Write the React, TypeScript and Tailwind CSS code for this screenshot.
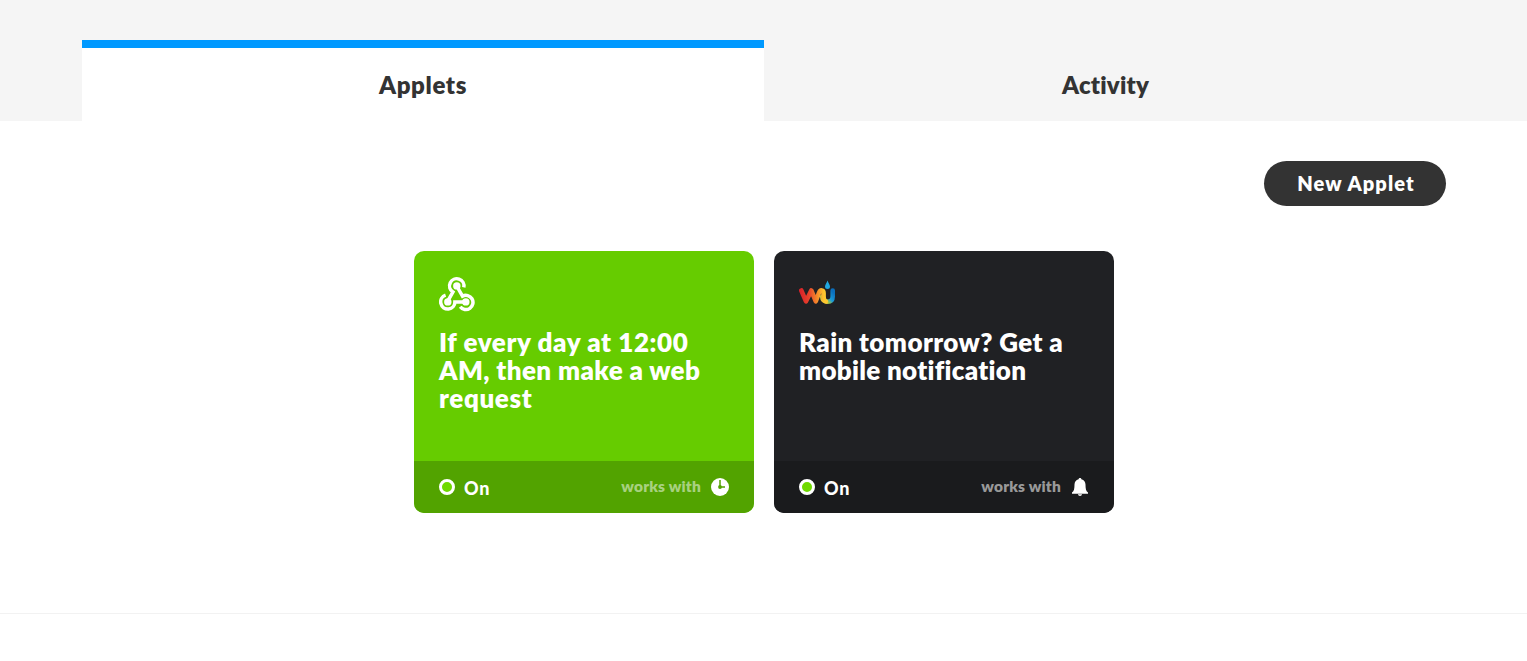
import type { ReactNode } from "react";

function WebhookIcon() {
  return (
    <svg className="block size-9" viewBox="0 0 36 36" fill="none" stroke="#fff" strokeWidth="3.5">
      <path d="M24.8 11.4A7.2 7.2 0 1 0 13.9 16L8.7 25.2" />
      <path d="M17.7 10L23.5 20.2A7.1 7.1 0 1 1 21.2 30.7" />
      <path d="M26.7 25.9H15.9A7.1 7.1 0 1 1 6.6 19.2" />
      <g fill="#fff" stroke="none">
        <circle cx="17.8" cy="9.9" r="3.7" />
        <circle cx="8.8" cy="25.9" r="3.7" />
        <circle cx="26.8" cy="25.9" r="3.7" />
      </g>
    </svg>
  );
}

function WeatherIcon() {
  return (
    <svg className="block size-9" viewBox="0 0 36 36" fill="none">
      <defs>
        <linearGradient id="wu-w" gradientUnits="userSpaceOnUse" x1="0" y1="0" x2="25" y2="0">
          <stop offset="0" stopColor="#d81f2a" />
          <stop offset=".4" stopColor="#e8432b" />
          <stop offset=".72" stopColor="#f58a2b" />
          <stop offset="1" stopColor="#fdc82f" />
        </linearGradient>
        <linearGradient id="wu-u" gradientUnits="userSpaceOnUse" x1="23" y1="26" x2="34" y2="16">
          <stop offset="0" stopColor="#fdc82f" />
          <stop offset=".3" stopColor="#9bc34a" />
          <stop offset=".55" stopColor="#1b9bd7" />
          <stop offset="1" stopColor="#0b6fbd" />
        </linearGradient>
      </defs>
      <g strokeWidth="4.6" strokeLinecap="round" strokeLinejoin="round">
        <path stroke="url(#wu-u)" d="M23.2 20.5C23.4 24.2 25.4 25.6 28.4 25.6C32 25.6 33.7 23.8 33.7 20.4V14.5" />
        <path stroke="url(#wu-w)" d="M2.3 14.5L7 25.3L12.3 14.5L16.8 25.3L20 16.8C21.4 13.2 24.6 14 24.6 17.2V20.4C24.6 23 25.3 24.5 26.7 25.4" />
      </g>
      <path fill="#20a7df" d="M28.5 4.5C29.3 7.2 31 8.5 31 10.6A2.5 2.5 0 0 1 26 10.6C26 8.5 27.7 7.2 28.5 4.5Z" />
    </svg>
  );
}

function ClockIcon() {
  return (
    <svg className="block size-[18px]" viewBox="0 0 18 18">
      <circle cx="9" cy="9" r="9" fill="#fff" />
      <path d="M9 2V9H14" fill="none" stroke="#52a300" strokeWidth="1.5" />
      <circle cx="9" cy="9" r="1.9" fill="#52a300" />
    </svg>
  );
}

function BellIcon() {
  return (
    <svg className="block size-[18px]" viewBox="0 0 18 18" fill="#fff">
      <path d="M9 0C9.8 0 10.3.5 10.4 1.2C13.2 1.9 14.4 4 14.5 6.5C14.6 10.5 14.8 13 17 14.5V15.8H1V14.5C3.2 13 3.4 10.5 3.5 6.5C3.6 4 4.8 1.9 7.6 1.2C7.7.5 8.2 0 9 0Z" />
      <path d="M6.9 16.3H11.1C10.8 17.5 10 18 9 18S7.2 17.5 6.9 16.3Z" />
    </svg>
  );
}

type CardProps = {
  icon: ReactNode;
  service: ReactNode;
  children: ReactNode;
  color: string;
  footer: string;
  muted: string;
};

function AppletCard({ icon, service, children, color, footer, muted }: CardProps) {
  return (
    <article className={`flex h-[262px] w-[340px] flex-col overflow-hidden rounded-[10px] text-white ${color}`}>
      <div className="flex-1 px-[25px] pt-[25px]">
        {icon}
        <h2 className="mt-4 text-[26px] leading-7 font-extrabold whitespace-nowrap">{children}</h2>
      </div>
      <footer className={`flex h-[52px] items-center px-[25px] ${footer}`}>
        <span className="size-4 rounded-full border-3 border-white bg-[#6fd900]" />
        <span className="ml-[9px] pt-px text-lg leading-6 font-black tracking-[0.8px]">On</span>
        <span className={`mr-2.5 ml-auto pb-[3px] text-[15.5px] leading-6 font-extrabold tracking-[0.18px] ${muted}`}>
          works with
        </span>
        {service}
      </footer>
    </article>
  );
}

export default function App() {
  return (
    <div className="h-[661px] overflow-hidden bg-white font-['Lato',sans-serif] text-[#333]">
      <nav className="flex h-[121px] bg-[#f5f5f5] pt-10 pr-[81px] pl-[82px] text-2xl font-extrabold">
        <a className="flex w-[682px] items-center justify-center border-t-8 border-[#0099ff] bg-white tracking-[0.65px]">
          Applets
        </a>
        <a className="flex w-[682px] items-center justify-center border-t-8 border-transparent pl-px tracking-[0.2px]">
          Activity
        </a>
      </nav>
      <main className="h-[493px] border-b border-[#f2f2f2] pt-10">
        <div className="flex justify-end pr-[81px]">
          <button className="h-[45px] w-[182px] rounded-full bg-[#333] pb-0.5 pl-0.5 text-xl font-extrabold tracking-[1.1px] text-white">
            New Applet
          </button>
        </div>
        <div className="mt-[45px] flex justify-center gap-5 pl-px">
          <AppletCard icon={<WebhookIcon />} service={<ClockIcon />} color="bg-[#66cc00]" footer="bg-[#52a300]" muted="text-[#a8d180]">
            <span className="block tracking-[0.6px]">If every day at 12:00</span>
            <span className="block tracking-[0.4px]">AM, then make a web</span>
            <span className="block tracking-[0.6px]">request</span>
          </AppletCard>
          <AppletCard icon={<WeatherIcon />} service={<BellIcon />} color="bg-[#202124]" footer="bg-[#1a1b1d]" muted="text-[#999]">
            <span className="block tracking-[0.4px]">Rain tomorrow? Get a</span>
            <span className="block tracking-[0.3px]">mobile notification</span>
          </AppletCard>
        </div>
      </main>
    </div>
  );
}
